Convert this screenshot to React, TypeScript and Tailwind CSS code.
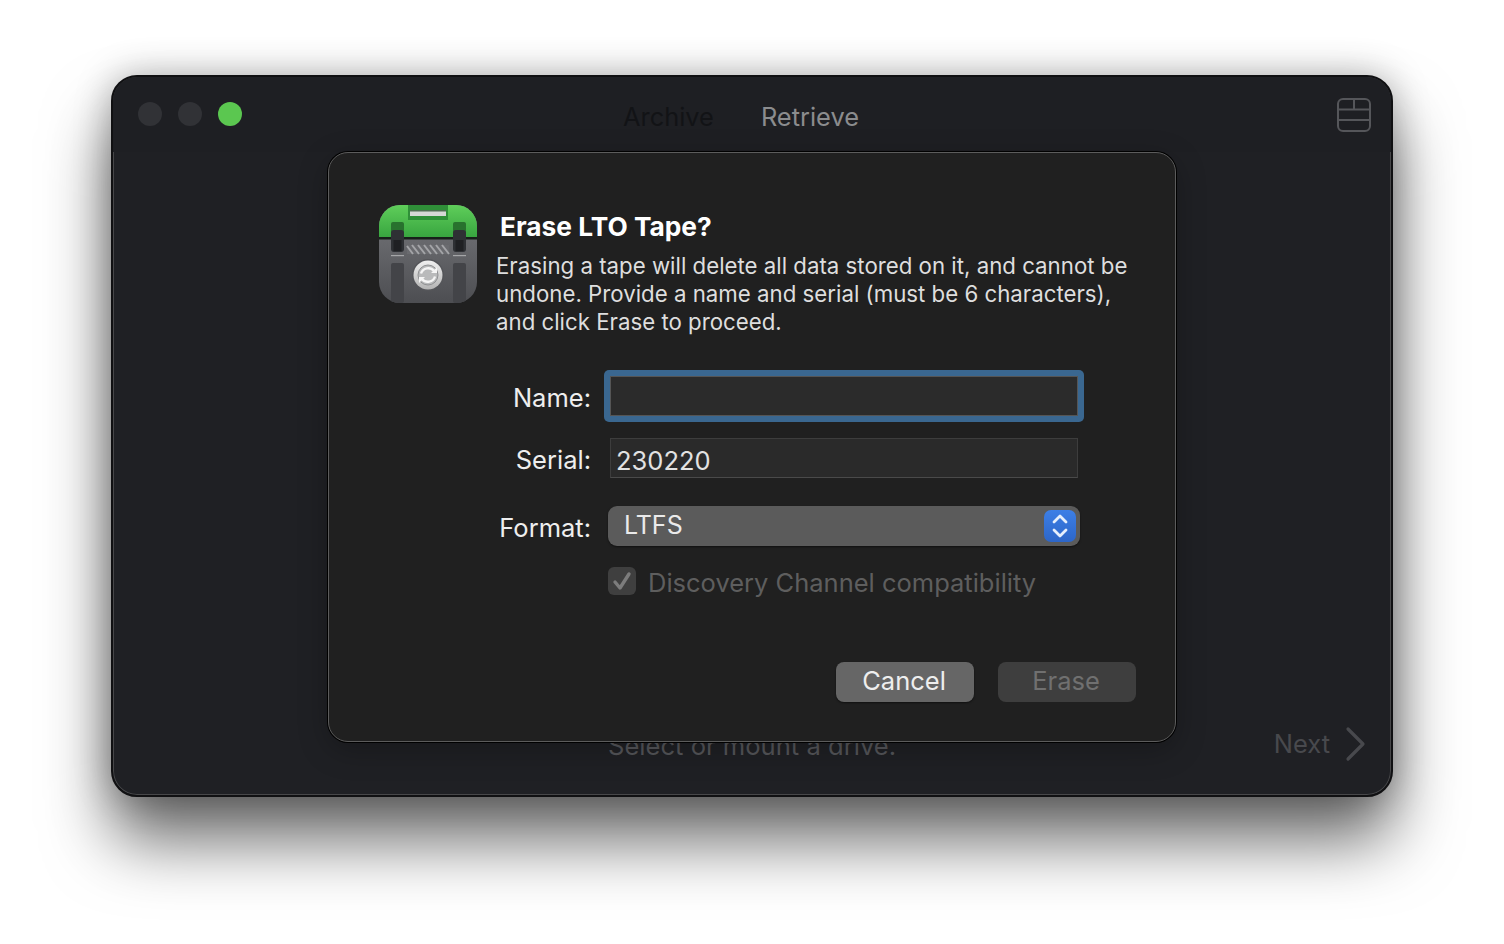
import React from "react";

function AppIcon() {
  return (
    <svg width="98" height="98" viewBox="0 0 98 98" className="shrink-0">
      <defs>
        <linearGradient id="g" x1="0" y1="0" x2="0" y2="1">
          <stop offset="0" stopColor="#5fce5a" />
          <stop offset="1" stopColor="#37a43f" />
        </linearGradient>
        <linearGradient id="b" x1="0" y1="0" x2="0" y2="1">
          <stop offset="0" stopColor="#77787c" />
          <stop offset="1" stopColor="#4d4e52" />
        </linearGradient>
        <linearGradient id="k" x1="0" y1="0" x2="0" y2="1">
          <stop offset="0" stopColor="#f0f0f0" />
          <stop offset="1" stopColor="#b4b4b4" />
        </linearGradient>
        <clipPath id="c"><rect width="98" height="98" rx="21" /></clipPath>
      </defs>
      <g clipPath="url(#c)">
        <rect width="98" height="98" fill="url(#b)" />
        <rect width="98" height="33" fill="url(#g)" />
        <rect y="32" width="98" height="2.5" fill="#17201a" />
        <path d="M29 0H69V15H29Z" fill="#2f8f38" />
        <rect x="31" y="6" width="36" height="5" fill="#d6d8d6" />
        <rect x="31" y="5" width="36" height="1.5" fill="#4f6f52" />
        <rect x="12" y="17" width="13" height="15" rx="2" fill="#28722e" />
        <rect x="74" y="17" width="13" height="15" rx="2" fill="#28722e" />
        <rect x="12" y="25" width="13" height="22" rx="3" fill="#2e3034" />
        <rect x="74" y="25" width="13" height="22" rx="3" fill="#2e3034" />
        <rect x="14.5" y="35" width="8" height="11" fill="#1f2023" />
        <rect x="76.5" y="35" width="8" height="11" fill="#1f2023" />
        <rect x="12" y="50" width="13" height="1.2" fill="#a5a6a8" />
        <rect x="74" y="50" width="13" height="1.2" fill="#a5a6a8" />
        <path d="M28 40 H70 V49 H28Z" fill="#6a6b6f" />
        <g stroke="#a3a4a7" strokeWidth="2">
          <path d="M28 41 L34 49M33 40 L40 49M39 40 L46 49M45 40 L52 49M51 40 L58 49M57 40 L64 49M63 40 L70 49" />
        </g>
        <rect x="12" y="58" width="13" height="40" rx="2" fill="#434448" />
        <rect x="74" y="58" width="13" height="40" rx="2" fill="#434448" />
        <circle cx="49" cy="70" r="16" fill="#55565a" />
        <circle cx="49" cy="70" r="14.5" fill="url(#k)" />
        <circle cx="49" cy="70" r="10" fill="#b9babb" stroke="#8f9092" strokeWidth="1" />
        <path d="M42 68.5A7.5 7.5 0 0 1 55 66M56 71.5A7.5 7.5 0 0 1 43 74" fill="none" stroke="#f5f5f5" strokeWidth="2.4" />
        <path d="M52 68H58V62Z M46 72H40V78Z" fill="#f5f5f5" />
      </g>
    </svg>
  );
}

function Row({ label, className, children }: { label: string; className?: string; children: React.ReactNode }) {
  return (
    <div className={`flex items-center ${className ?? ""}`}>
      <div className="w-[261px] shrink-0 pt-[4px] text-right text-[25.5px] leading-[30px] text-[#eeeeee]">{label}</div>
      {children}
    </div>
  );
}

export default function App() {
  return (
    <div
      className="h-[944px] w-[1504px] overflow-hidden bg-white pl-[111px] pt-[75px]"
      style={{ fontFamily: "Inter, 'Noto Sans', sans-serif" }}
    >
      <div className="relative flex h-[722px] w-[1282px] flex-col rounded-[26px] border-2 border-[#101012] bg-[#1f2024] shadow-[0_0_0_1px_rgba(120,120,120,0.45)_inset,0_44px_66px_rgba(0,0,0,0.58),0_0_36px_rgba(0,0,0,0.28)]">
        <header className="relative flex h-[75px] shrink-0 items-center rounded-t-[24px] bg-[#1e1f23] pb-[1px] pl-[25px] pr-[19px]">
          <div className="flex gap-[16px]">
            <span className="h-6 w-6 rounded-full bg-[#313236]" />
            <span className="h-6 w-6 rounded-full bg-[#313236]" />
            <span className="h-6 w-6 rounded-full bg-[#5bc750]" />
          </div>
          <nav className="ml-[381px] flex gap-[47px] pt-[6px] text-[25.4px] text-[#8b8c8e]">
            <span className="text-[#121316]">Archive</span>
            <span>Retrieve</span>
          </nav>
          <svg width="36" height="36" viewBox="0 0 36 36" className="ml-auto mt-[1px]" fill="none" stroke="#55565a" strokeWidth="2">
            <rect x="2" y="2" width="32" height="32" rx="5" />
            <path d="M2 12.5H34M2 23H34M18 2V12.5" />
          </svg>
        </header>
        <main className="relative flex flex-1 items-end pb-[33px] pr-[24px]">
          <span className="mb-[1px] ml-[495px] text-[25.6px] leading-[30px] text-[#55565a]">Select or mount a drive.</span>
          <span className="ml-auto flex items-center gap-[15px] text-[25.5px] leading-[30px] text-[#48494d]">
            <span className="-mt-[1px]">Next</span>
            <svg width="22" height="36" viewBox="0 0 22 36" fill="none" stroke="#48494d" strokeWidth="3.2" strokeLinecap="round" strokeLinejoin="round">
              <path d="M3 3L18 18L3 33" />
            </svg>
          </span>
        </main>

        <div className="absolute left-[215px] top-[75px] flex h-[590px] w-[848px] flex-col rounded-[20px] border border-[#5c5c5c] bg-[#202020] pl-[50px] pr-[39px] pt-[52px] shadow-[0_0_0_1px_#000,0_8px_30px_rgba(0,0,0,0.25)]">
          <div className="flex">
            <AppIcon />
            <div className="ml-[19px]">
              <div className="ml-[4px] mt-[6px] text-[26.3px] font-bold leading-[32px] text-white">Erase LTO Tape?</div>
              <p className="mt-[9px] w-[640px] text-[22.25px] leading-[28px] text-[#dedede]">
                Erasing a tape will delete all data stored on it, and cannot be undone. Provide a name and serial (must be 6 characters), and click Erase to proceed.
              </p>
            </div>
          </div>

          <div className="-ml-[49px] mt-[34px]">
            <div className="flex flex-col">
              <Row label="Name:">
                <div className="ml-[13px] h-[52px] w-[480px] rounded-[5px] bg-[#3a6790] p-[6px]">
                  <div className="h-full w-full border border-[#555] bg-[#2b2b2b]" />
                </div>
              </Row>
              <Row label="Serial:" className="mt-[16px]">
                <div className="ml-[19px] flex h-[40px] w-[468px] items-center border border-[#3d3d3d] border-b-[#4a4a4a] bg-[#2a2a2a] pl-[5px] pt-[6px] text-[25.5px] text-[#e2e2e2]">
                  230220
                </div>
              </Row>
              <Row label="Format:" className="mt-[28px]">
                <div className="ml-[17px] flex h-[40px] w-[472px] items-center justify-between rounded-[9px] bg-[#5b5b5b] pl-[16px] pr-[4px] text-[25px] text-[#eaeaea] shadow-[0_1px_2px_rgba(0,0,0,0.5)]">
                  <span className="-mt-[1px]">LTFS</span>
                  <span className="flex h-[32px] w-[32px] items-center justify-center rounded-[7px] bg-gradient-to-b from-[#3d7fe6] to-[#2d66c8]">
                    <svg width="18" height="28" viewBox="0 0 18 28" fill="none" stroke="#e6effc" strokeWidth="2.8" strokeLinecap="round" strokeLinejoin="round">
                      <path d="M3 10L9 4L15 10M3 18L9 24L15 18" />
                    </svg>
                  </span>
                </div>
              </Row>
              <div className="ml-[278px] mt-[18px] flex items-center gap-[12px]">
                <span className="flex h-[28px] w-[28px] items-center justify-center rounded-[6px] bg-[#3f3f3f]">
                  <svg width="22" height="22" viewBox="0 0 22 22" fill="none" stroke="#7c7c7c" strokeWidth="3.4" strokeLinecap="round" strokeLinejoin="round">
                    <path d="M4 12L9 18L18 4" />
                  </svg>
                </span>
                <span className="pt-[4px] text-[25.5px] leading-[30px] text-[#5e5e5e]">Discovery Channel compatibility</span>
              </div>
            </div>
          </div>

          <div className="mt-[64px] flex justify-end gap-[24px]">
            <div className="flex h-[40px] w-[138px] items-center justify-center rounded-[8px] bg-[#666666] pb-[2px] pr-[2px] text-[25.5px] text-[#eeeeee] shadow-[0_1px_2px_rgba(0,0,0,0.5)]">Cancel</div>
            <div className="flex h-[40px] w-[138px] items-center justify-center rounded-[8px] bg-[#3e3e3e] pb-[2px] pr-[2px] text-[25.5px] text-[#707070]">Erase</div>
          </div>
        </div>
      </div>
    </div>
  );
}
